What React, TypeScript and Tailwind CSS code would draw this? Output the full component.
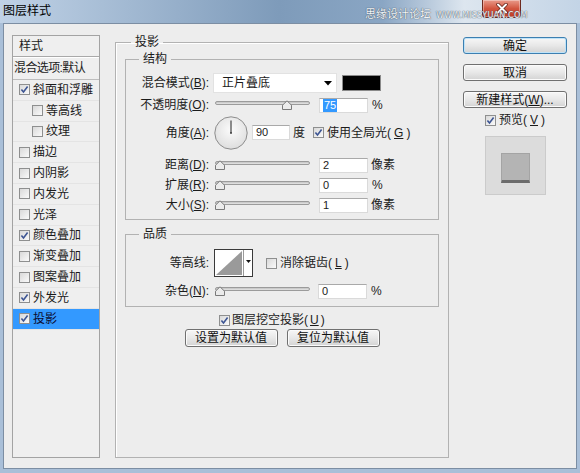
import clsx from 'clsx';

const font = "font-['Liberation_Sans','Noto_Sans_CJK_SC',sans-serif]";

function Check({ checked = false }: { checked?: boolean }) {
  return (
    <span className="inline-flex items-center justify-center w-[11px] h-[11px] shrink-0 border border-[#8e8f8f] bg-linear-to-br from-[#d9d9d9] to-[#fafafa]">
      {checked && (
        <svg width="9" height="9" viewBox="0 0 9 9">
          <path d="M1.4 4.4L3.5 6.9L7.6 1.6" stroke="#3d5593" strokeWidth="1.6" fill="none" />
        </svg>
      )}
    </span>
  );
}

function Key({ k }: { k: string }) {
  return (
    <>
      (<span className="underline underline-offset-1">{k}</span>)
    </>
  );
}

function Slider({ value }: { value: number }) {
  return (
    <div className="relative w-[95px] h-[12px] shrink-0 ml-[5px]">
      <div className="absolute left-0 right-0 top-[2px] h-[4px] rounded-full border border-[#9b9b9b] bg-linear-to-b from-[#c2c2c2] to-[#e6e6e6]" />
      <svg className="absolute top-[1px]" style={{ left: value * 0.89 }} width="10" height="10" viewBox="0 0 10 10">
        <path d="M0.5 9.5V5.2L5 0.8L9.5 5.2V9.5Z" fill="#ebebeb" stroke="#7a7a7a" />
      </svg>
    </div>
  );
}

function Num({ v, w = 49, selected = false, className }: { v: string; w?: number; selected?: boolean; className?: string }) {
  return (
    <div
      className={clsx(
        'h-[15px] bg-white border border-[#dadada] border-t-[#a9a9a9] flex items-center pl-[3px] text-[11px] leading-[13px] shrink-0',
        w === 49 ? 'w-[49px]' : 'w-[38px]',
        className,
      )}
    >
      {selected ? <span className="bg-[#3399ff] text-white px-[1px]">{v}</span> : v}
    </div>
  );
}

function Label({ children }: { children: React.ReactNode }) {
  return <div className="w-[84px] pr-[1px] text-right whitespace-nowrap shrink-0">{children}</div>;
}

function Btn({ children, primary = false, className }: { children: React.ReactNode; primary?: boolean; className?: string }) {
  return (
    <div
      className={clsx(
        'h-[17px] flex items-center justify-center rounded-[3px] border bg-linear-to-b from-[#f7f7f7] via-[#e8e8e8] to-[#d3d3d3] text-[12px] leading-[14px] text-[#111]',
        primary ? 'border-[#3c7fb1] shadow-[inset_0_0_0_1px_#bfe3f8]' : 'border-[#707070] shadow-[inset_0_0_0_1px_#fbfbfb]',
        className,
      )}
    >
      {children}
    </div>
  );
}

const styles = [
  { t: '斜面和浮雕', c: true },
  { t: '等高线', sub: true },
  { t: '纹理', sub: true },
  { t: '描边' },
  { t: '内阴影' },
  { t: '内发光' },
  { t: '光泽' },
  { t: '颜色叠加', c: true },
  { t: '渐变叠加' },
  { t: '图案叠加' },
  { t: '外发光', c: true },
  { t: '投影', c: true, sel: true },
];

export default function App() {
  return (
    <div className={clsx(font, 'w-[580px] h-[473px] bg-[#a9bfd8] text-[12px] leading-[16px] text-[#1b1b1b] overflow-hidden flex flex-col')}>
      {/* Title bar */}
      <div className="relative h-[23px] shrink-0 flex items-start bg-[linear-gradient(90deg,#c0d2e6_0%,#a2b9d2_22%,#7e9bba_48%,#8aa6c4_66%,#dde6ef_80%,#c3d4e6_100%)]">
        <span className="ml-[3px] mt-[3px] text-[12px] leading-[16px] text-black">图层样式</span>
        <div className="ml-auto mr-[59px] w-[39px] h-[18px] rounded-b-[4px] border border-t-0 border-[#6e2a1f] bg-linear-to-b from-[#e89a8a] via-[#d2553f] to-[#c23c25] flex items-center justify-center shadow-[inset_0_0_0_1px_rgba(255,255,255,0.35)]">
          <svg width="12" height="11" viewBox="0 0 12 11">
            <path d="M2 1.5L10 9.5M10 1.5L2 9.5" stroke="#5a1a10" strokeWidth="3.4" strokeLinecap="round" />
            <path d="M2 1.5L10 9.5M10 1.5L2 9.5" stroke="#ffffff" strokeWidth="2" strokeLinecap="round" />
          </svg>
        </div>
        <div className="absolute left-[365px] top-[8px] flex items-end gap-[5px] text-[#f2f5f8] [text-shadow:0_0_1px_#4a5a6a,0_0_1px_#4a5a6a]">
          <span className="text-[11px] leading-[13px]">思缘设计论坛</span>
          <span className="text-[8px] leading-[10px] font-['DejaVu_Sans',sans-serif] tracking-[0.2px]">WWW.MISSYUAN.COM</span>
        </div>
      </div>

      {/* Client area */}
      <div className="mx-[3px] h-[446px] border border-[#7c8ea3] bg-[#ededed] flex items-start">
        {/* Style list */}
        <div className="ml-[8px] mt-[11px] w-[88px] h-[423px] border border-[#a3a3a3] bg-[#efefef] flex flex-col">
          <div className="h-[21px] flex items-center pl-[6px] border-b border-[#a9a9a9] shadow-[0_1px_0_#ffffff]">样式</div>
          <div className="h-[23px] flex items-center pl-[1px] border-b border-[#bdbdbd] whitespace-nowrap tracking-[-0.6px] overflow-hidden">
            混合选项:默认
          </div>
          {styles.map((s) => (
            <div
              key={s.t}
              className={clsx(
                'h-[20.8px] flex items-center gap-[3px] border-b border-[#e4e4e4] whitespace-nowrap',
                s.sub ? 'pl-[19px]' : 'pl-[6px]',
                s.sel && 'bg-[#3399ff] border-[#3399ff]',
              )}
            >
              <Check checked={s.c} />
              <span className={s.sel ? 'text-[#0b0b30]' : ''}>{s.t}</span>
            </div>
          ))}
        </div>

        {/* Drop shadow panel */}
        <fieldset className="ml-[15px] mt-[10px] w-[334px] h-[424px] border border-[#b2b2b2] shadow-[inset_1px_1px_0_#ffffff]">
          <legend className="ml-[15px] px-[4px] leading-[16px]">投影</legend>

          <fieldset className="mx-[9px] mt-[1px] pt-[6px] pb-[4px] border border-[#b2b2b2]">
            <legend className="ml-[13px] px-[4px] leading-[16px]">结构</legend>

            <div className="h-[20px] flex items-center">
              <Label>
                混合模式<Key k="B" />:
              </Label>
              <div className="ml-[3px] w-[124px] h-[20px] bg-white border border-[#e2e2e2] flex items-center pl-[8px] pr-[4px]">
                <span>正片叠底</span>
                <svg className="ml-auto" width="8" height="5" viewBox="0 0 8 5">
                  <path d="M0 0H8L4 4.5Z" fill="#000" />
                </svg>
              </div>
              <div className="ml-[5px] w-[39px] h-[16px] bg-black border border-[#8a8a8a]" />
            </div>

            <div className="mt-[2px] h-[20px] flex items-center">
              <Label>
                不透明度<Key k="O" />:
              </Label>
              <Slider value={75} />
              <Num v="75" selected className="ml-[9px]" />
              <span className="ml-[4px]">%</span>
            </div>

            <div className="h-[35px] flex items-center">
              <Label>
                角度<Key k="A" />:
              </Label>
              <svg className="ml-[4px] shrink-0" width="34" height="34" viewBox="0 0 34 34">
                <defs>
                  <radialGradient id="dial" cx="50%" cy="40%" r="60%">
                    <stop offset="0%" stopColor="#fbfbfb" />
                    <stop offset="100%" stopColor="#dedede" />
                  </radialGradient>
                </defs>
                <circle cx="17" cy="17" r="16.2" fill="url(#dial)" stroke="#8c8c8c" />
                <path d="M17 17V4.5" stroke="#333" strokeWidth="1.1" />
                <circle cx="17" cy="17" r="0.9" fill="#333" />
              </svg>
              <Num v="90" w={38} className="ml-[4px]" />
              <span className="ml-[3px]">度</span>
              <span className="ml-[8px] flex items-center gap-[3px]">
                <Check checked />
                使用全局光<Key k="G" />
              </span>
            </div>

            <div className="mt-[5px] h-[20px] flex items-center">
              <Label>
                距离<Key k="D" />:
              </Label>
              <Slider value={0} />
              <Num v="2" className="ml-[9px]" />
              <span className="ml-[3px]">像素</span>
            </div>

            <div className="h-[20px] flex items-center">
              <Label>
                扩展<Key k="R" />:
              </Label>
              <Slider value={0} />
              <Num v="0" className="ml-[9px]" />
              <span className="ml-[4px]">%</span>
            </div>

            <div className="h-[20px] flex items-center">
              <Label>
                大小<Key k="S" />:
              </Label>
              <Slider value={0} />
              <Num v="1" className="ml-[9px]" />
              <span className="ml-[3px]">像素</span>
            </div>
          </fieldset>

          <fieldset className="mx-[9px] mt-[6px] pt-[7px] pb-[6px] border border-[#b2b2b2]">
            <legend className="ml-[13px] px-[4px] leading-[16px]">品质</legend>

            <div className="h-[28px] flex items-center">
              <Label>等高线:</Label>
              <div className="ml-[4px] w-[39px] h-[28px] border border-[#3a3a3a] bg-white flex shrink-0">
                <svg width="28" height="26" viewBox="0 0 28 26" className="shrink-0">
                  <path d="M1 25L27 1V25Z" fill="#9a9a9a" />
                </svg>
                <div className="flex-1 border-l border-[#9a9a9a] flex justify-center pt-[10px]">
                  <svg width="5" height="3" viewBox="0 0 5 3">
                    <path d="M0 0H5L2.5 3Z" fill="#111" />
                  </svg>
                </div>
              </div>
              <span className="ml-[13px] flex items-center gap-[3px]">
                <Check />
                消除锯齿<Key k="L" />
              </span>
            </div>

            <div className="mt-[5px] h-[18px] flex items-center">
              <Label>
                杂色<Key k="N" />:
              </Label>
              <Slider value={0} />
              <Num v="0" className="ml-[8px]" />
              <span className="ml-[4px]">%</span>
            </div>
          </fieldset>

          <div className="mt-[5px] h-[16px] pl-[103px] flex items-center gap-[2px]">
            <Check checked />
            图层挖空投影<Key k="U" />
          </div>
          <div className="mt-[1px] flex justify-center gap-[9px]">
            <Btn className="w-[93px] h-[18px]">设置为默认值</Btn>
            <Btn className="w-[93px] h-[18px]">复位为默认值</Btn>
          </div>
        </fieldset>

        {/* Buttons + preview */}
        <div className="ml-[14px] mt-[13px] w-[104px] flex flex-col">
          <Btn primary>确定</Btn>
          <Btn className="mt-[10px]">取消</Btn>
          <Btn className="mt-[10px] whitespace-nowrap">
            新建样式<Key k="W" />...
          </Btn>
          <div className="mt-[4px] h-[16px] flex items-center justify-center gap-[3px]">
            <Check checked />
            预览<Key k="V" />
          </div>
          <div className="mt-[8px] mx-auto w-[61px] h-[59px] bg-[#dcdcdc] border border-[#cbcbcb] flex justify-center pt-[16px]">
            <div className="w-[29px] h-[30px] bg-[#b4b4b4] border border-[#a4a4a4] border-b-[3px] border-b-[#6c6c6c]" />
          </div>
        </div>
      </div>
    </div>
  );
}
